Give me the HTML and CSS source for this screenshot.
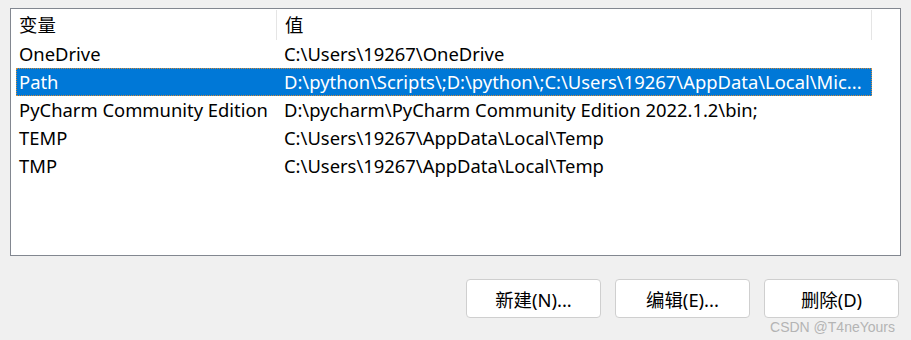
FILE: index.html
```html
<!DOCTYPE html>
<html lang="zh-CN">
<head>
  <meta charset="UTF-8">
  <title>用户变量</title>
  <link rel="stylesheet" href="styles.css">
</head>
<body>

<div class="var-list">
  <div class="list-head">
    <div class="col-name">变量</div>
    <div class="col-value">值</div>
  </div>

  <div class="list-row">
    <div class="col-name">OneDrive</div>
    <div class="col-value">C:\Users\19267\OneDrive</div>
  </div>
  <div class="list-row selected">
    <div class="col-name">Path</div>
    <div class="col-value">D:\python\Scripts\;D:\python\;C:\Users\19267\AppData\Local\Mic...</div>
  </div>
  <div class="list-row">
    <div class="col-name">PyCharm Community Edition</div>
    <div class="col-value">D:\pycharm\PyCharm Community Edition 2022.1.2\bin;</div>
  </div>
  <div class="list-row">
    <div class="col-name">TEMP</div>
    <div class="col-value">C:\Users\19267\AppData\Local\Temp</div>
  </div>
  <div class="list-row">
    <div class="col-name">TMP</div>
    <div class="col-value">C:\Users\19267\AppData\Local\Temp</div>
  </div>
</div>

<div class="actions">
  <button>新建(N)...</button>
  <button>编辑(E)...</button>
  <button>删除(D)</button>
</div>

<div class="watermark">CSDN @T4neYours</div>

</body>
</html>
```

FILE: styles.css
```css
body {
  margin: 0;
  background: #f0f0f0;
  font-family: 'Noto Sans', 'Noto Sans CJK SC', sans-serif;
  font-size: 18.4px;
  color: #000;
  height: 340px;
  position: relative;
  overflow: hidden;
}

.var-list {
  margin: 8px 10px 0 10px;
  height: 246px;
  background: #fff;
  border: 1px solid #828790;
  padding: 0 28px 0 5px;
}

.list-head {
  display: flex;
  height: 31px;
  align-items: center;
}

.list-head .col-name,
.list-head .col-value {
  border-right: 1px solid #e5e5e5;
  height: 30px;
  line-height: 30px;
}

.col-name {
  width: 257px;
  padding-left: 3px;
  flex-shrink: 0;
  white-space: nowrap;
  overflow: hidden;
}

.col-value {
  width: 587px;
  padding-left: 8px;
  white-space: nowrap;
}

.list-row {
  display: flex;
  height: 28px;
  line-height: 28px;
  box-sizing: border-box;
}

.list-row.selected {
  background: #0078d7;
  color: #fff;
  outline: 1px dotted #d08a3a;
  outline-offset: -1px;
}

.actions {
  display: flex;
  justify-content: flex-end;
  gap: 14px;
  margin-top: 23px;
  padding-right: 12px;
}

button {
  width: 135px;
  height: 39px;
  background: #fff;
  border: 1px solid #cfcfcf;
  border-radius: 4px;
  font-family: 'Noto Sans', 'Noto Sans CJK SC', sans-serif;
  font-size: 18.4px;
  color: #000;
  padding: 0;
}

.watermark {
  position: absolute;
  right: 16px;
  bottom: 5px;
  font-family: 'Liberation Sans', Arial, sans-serif;
  font-size: 14px;
  color: #b4b4b4;
}
```
